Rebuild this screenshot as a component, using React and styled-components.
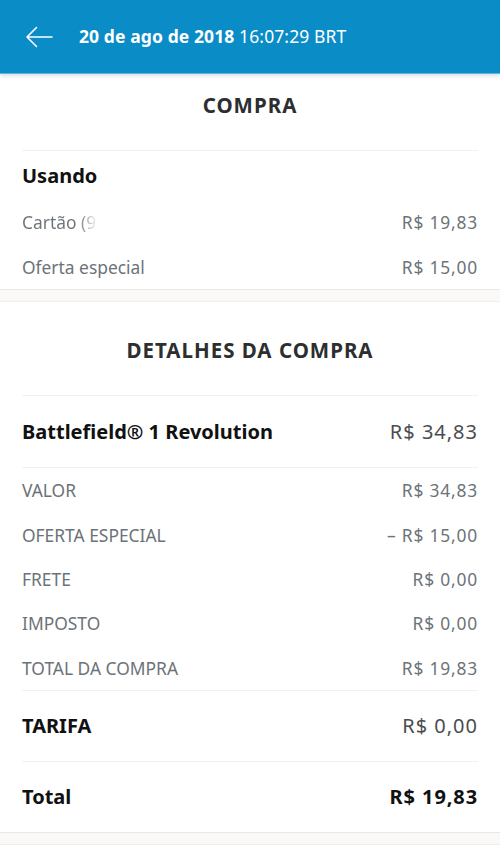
import styled, { createGlobalStyle } from "styled-components";

const GlobalStyle = createGlobalStyle`
  html, body {
    margin: 0;
    padding: 0;
    background: #ffffff;
  }
  body {
    font-family: "Noto Sans", "Open Sans", Arial, sans-serif;
    -webkit-font-smoothing: antialiased;
  }
`;

const usando = [
  { label: "Cartão (9", value: "R$ 19,83", fade: true },
  { label: "Oferta especial", value: "R$ 15,00" },
];

const detalhes = [
  { label: "VALOR", value: "R$ 34,83" },
  { label: "OFERTA ESPECIAL", value: "– R$ 15,00" },
  { label: "FRETE", value: "R$ 0,00" },
  { label: "IMPOSTO", value: "R$ 0,00" },
  { label: "TOTAL DA COMPRA", value: "R$ 19,83" },
];

function BackArrow() {
  return (
    <svg width="28" height="22" viewBox="0 0 28 22" fill="none">
      <path
        d="M27 11H2M11.5 1.5L2 11l9.5 9.5"
        stroke="#ffffff"
        strokeWidth="1.6"
        strokeLinecap="round"
        strokeLinejoin="round"
      />
    </svg>
  );
}

export default function App() {
  return (
    <Page>
      <GlobalStyle />
      <Header>
        <BackArrow />
        <HeaderTitle>
          <strong>20 de ago de 2018</strong> 16:07:29 BRT
        </HeaderTitle>
      </Header>

      <Card>
        <SectionTitle $top={17} $height={76}>
          COMPRA
        </SectionTitle>
        <Inner>
          <BoldRow $height={49}>
            <BoldLabel>Usando</BoldLabel>
          </BoldRow>
          {usando.map((r) => (
            <Row key={r.label} $height={44.5}>
              <Label $fade={r.fade}>{r.label}</Label>
              <Value>{r.value}</Value>
            </Row>
          ))}
        </Inner>
      </Card>

      <Gap />

      <Card>
        <SectionTitle $top={34} $height={93}>
          DETALHES DA COMPRA
        </SectionTitle>
        <Inner>
          <BoldRow $height={72} $bottom>
            <BoldLabel>Battlefield® 1 Revolution</BoldLabel>
            <BigValue>R$ 34,83</BigValue>
          </BoldRow>
          {detalhes.map((r) => (
            <Row key={r.label} $height={44.4}>
              <Label>{r.label}</Label>
              <Value>{r.value}</Value>
            </Row>
          ))}
          <BoldRow $height={72} $top $bottom>
            <BoldLabel>TARIFA</BoldLabel>
            <BigValue>R$ 0,00</BigValue>
          </BoldRow>
          <BoldRow $height={70}>
            <BoldLabel>Total</BoldLabel>
            <BigValue $strong>R$ 19,83</BigValue>
          </BoldRow>
        </Inner>
      </Card>

      <Gap />
      <Footer />
    </Page>
  );
}

const Page = styled.div`
  width: 500px;
  min-height: 858px;
  background: #ffffff;
  overflow: hidden;
`;

const Header = styled.div`
  height: 74px;
  box-sizing: border-box;
  background: #0a8cc6;
  display: flex;
  align-items: center;
  gap: 26px;
  padding: 0 0 0 25px;
  border-bottom: 1px solid #5fb5dd;
  box-shadow: 0 2px 4px rgba(0, 90, 140, 0.18);
  position: relative;
  z-index: 1;
`;

const HeaderTitle = styled.div`
  color: #ffffff;
  font-size: 17.5px;
  letter-spacing: 0.1px;
  font-weight: 400;
  margin-top: -1px;

  strong {
    font-weight: 700;
  }
`;

const Card = styled.div`
  background: #ffffff;
`;

const SectionTitle = styled.div`
  height: ${(p) => p.$height}px;
  padding-top: ${(p) => p.$top}px;
  box-sizing: border-box;
  text-align: center;
  line-height: 28px;
  font-size: 20.5px;
  font-weight: 700;
  color: #2c2e2f;
  letter-spacing: 1px;
`;

const Inner = styled.div`
  margin: 0 22px;
  border-top: 1px solid #eef0f1;
`;

const BoldRow = styled.div`
  height: ${(p) => p.$height}px;
  display: flex;
  align-items: center;
  justify-content: space-between;
  border-top: ${(p) => (p.$top ? "1px solid #eef0f1" : "none")};
  border-bottom: ${(p) => (p.$bottom ? "1px solid #eef0f1" : "none")};
  box-sizing: border-box;
`;

const BoldLabel = styled.span`
  font-size: 20px;
  font-weight: 700;
  color: #111111;
`;

const BigValue = styled.span`
  font-size: 20px;
  letter-spacing: ${(p) => (p.$strong ? 0.9 : 1)}px;
  font-weight: ${(p) => (p.$strong ? 700 : 400)};
  color: ${(p) => (p.$strong ? "#111111" : "#4a4d4f")};
`;

const Row = styled.div`
  height: ${(p) => p.$height}px;
  display: flex;
  align-items: center;
  justify-content: space-between;
  box-sizing: border-box;
`;

const Label = styled.span`
  font-size: 17.4px;
  color: #6c7378;
  ${(p) =>
    p.$fade &&
    `
    background: linear-gradient(90deg, #6c7378 75%, rgba(108,115,120,0.1) 100%);
    -webkit-background-clip: text;
    background-clip: text;
    color: transparent;
  `}
`;

const Value = styled.span`
  font-size: 17.4px;
  letter-spacing: 0.8px;
  color: #6c7378;
`;

const Gap = styled.div`
  height: 11px;
  background: #faf9f7;
  border-top: 1px solid #e8e8e6;
  border-bottom: 1px solid #eeeeec;
`;

const Footer = styled.div`
  height: 13px;
  background: #ffffff;
  border-bottom: 2px solid #b9b9b9;
`;
